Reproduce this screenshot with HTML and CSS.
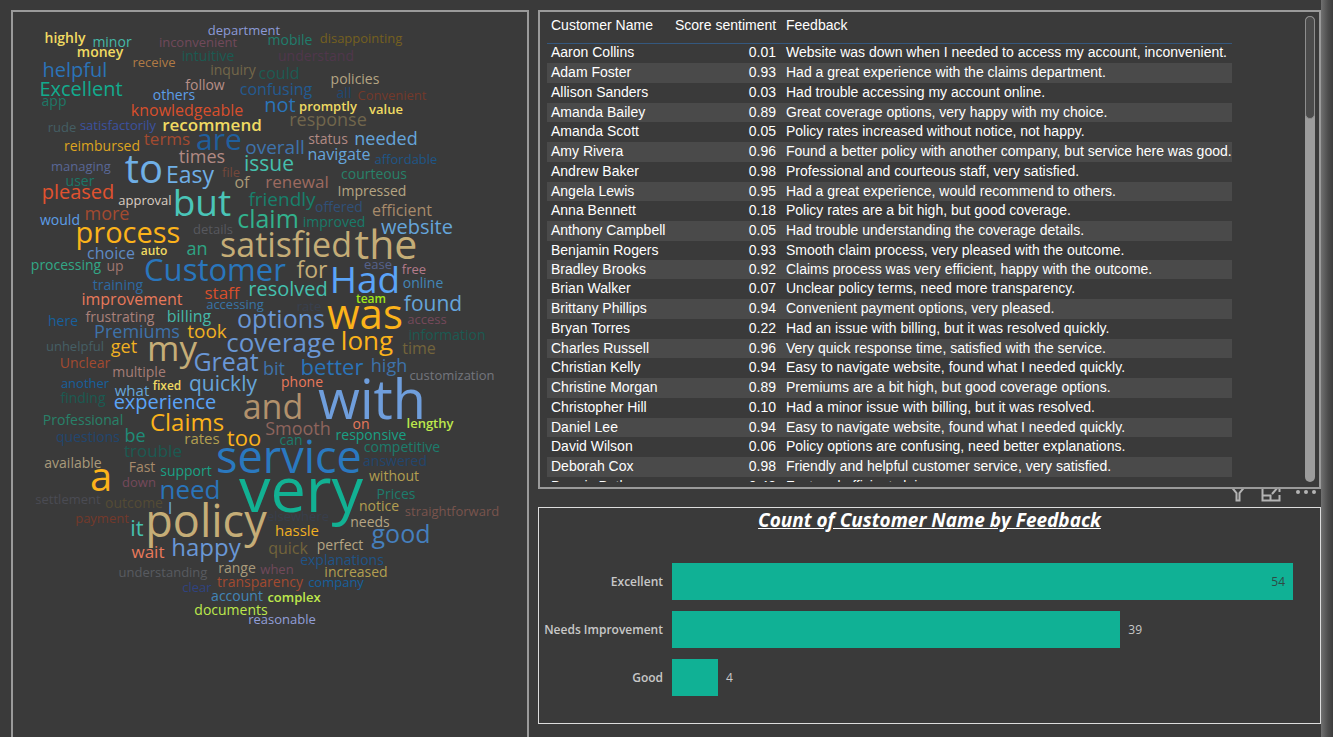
FILE: index.html
```html
<!DOCTYPE html>
<html lang="en">
<head>
<meta charset="utf-8">
<title>Customer feedback report</title>
<link rel="stylesheet" href="styles.css">
</head>
<body>
<main class="report">
  <section class="panel cloud" aria-label="Feedback words">
    <svg class="cloud-canvas" id="cloud" viewBox="13 12 514 725"></svg>
  </section>
  <div class="side">
    <section class="panel feedback">
      <div class="table-scroll">
        <table class="grid">
          <thead><tr><th class="name">Customer Name</th><th class="score">Score sentiment</th><th>Feedback</th></tr></thead>
          <tbody>
            <tr><td>Aaron Collins</td><td>0.01</td><td>Website was down when I needed to access my account, inconvenient.</td></tr>
            <tr><td>Adam Foster</td><td>0.93</td><td>Had a great experience with the claims department.</td></tr>
            <tr><td>Allison Sanders</td><td>0.03</td><td>Had trouble accessing my account online.</td></tr>
            <tr><td>Amanda Bailey</td><td>0.89</td><td>Great coverage options, very happy with my choice.</td></tr>
            <tr><td>Amanda Scott</td><td>0.05</td><td>Policy rates increased without notice, not happy.</td></tr>
            <tr><td>Amy Rivera</td><td>0.96</td><td>Found a better policy with another company, but service here was good.</td></tr>
            <tr><td>Andrew Baker</td><td>0.98</td><td>Professional and courteous staff, very satisfied.</td></tr>
            <tr><td>Angela Lewis</td><td>0.95</td><td>Had a great experience, would recommend to others.</td></tr>
            <tr><td>Anna Bennett</td><td>0.18</td><td>Policy rates are a bit high, but good coverage.</td></tr>
            <tr><td>Anthony Campbell</td><td>0.05</td><td>Had trouble understanding the coverage details.</td></tr>
            <tr><td>Benjamin Rogers</td><td>0.93</td><td>Smooth claim process, very pleased with the outcome.</td></tr>
            <tr><td>Bradley Brooks</td><td>0.92</td><td>Claims process was very efficient, happy with the outcome.</td></tr>
            <tr><td>Brian Walker</td><td>0.07</td><td>Unclear policy terms, need more transparency.</td></tr>
            <tr><td>Brittany Phillips</td><td>0.94</td><td>Convenient payment options, very pleased.</td></tr>
            <tr><td>Bryan Torres</td><td>0.22</td><td>Had an issue with billing, but it was resolved quickly.</td></tr>
            <tr><td>Charles Russell</td><td>0.96</td><td>Very quick response time, satisfied with the service.</td></tr>
            <tr><td>Christian Kelly</td><td>0.94</td><td>Easy to navigate website, found what I needed quickly.</td></tr>
            <tr><td>Christine Morgan</td><td>0.89</td><td>Premiums are a bit high, but good coverage options.</td></tr>
            <tr><td>Christopher Hill</td><td>0.10</td><td>Had a minor issue with billing, but it was resolved.</td></tr>
            <tr><td>Daniel Lee</td><td>0.94</td><td>Easy to navigate website, found what I needed quickly.</td></tr>
            <tr><td>David Wilson</td><td>0.06</td><td>Policy options are confusing, need better explanations.</td></tr>
            <tr><td>Deborah Cox</td><td>0.98</td><td>Friendly and helpful customer service, very satisfied.</td></tr>
            <tr><td>Dennis Butler</td><td>0.48</td><td>Fast and efficient claims process.</td></tr>
          </tbody>
        </table>
      </div>
      <div class="track"><div class="thumb"></div></div>
    </section>
    <div class="tools">
      <button class="tool" aria-label="Filters"><svg width="16" height="18" viewBox="0 0 16 18"><path d="M1.500 1.500h13v1.500l-5 6v7.500h-3v-7.500l-5-6z"/></svg></button>
      <button class="tool" aria-label="Focus mode"><svg width="20" height="18" viewBox="0 0 20 18"><path d="M10 1.500H1.500v15h17V11M12 1.500h6.500V8M18 2l-7 8M1.500 11.500h8v5"/></svg></button>
      <button class="tool" aria-label="More options"><svg class="dots" width="20" height="18" viewBox="0 0 20 18"><circle cx="2" cy="8" r="2"/><circle cx="10" cy="8" r="2"/><circle cx="18" cy="8" r="2"/></svg></button>
    </div>
    <section class="panel chart">
      <h2 class="chart-title">Count of Customer Name by Feedback</h2>
      <div class="bars">
        <span class="cat">Excellent</span><div class="lane"><div class="bar" style="width:100%"><span class="inside">54</span></div></div>
        <span class="cat">Needs Improvement</span><div class="lane"><div class="bar" style="width:72.200%"></div><span class="val">39</span></div>
        <span class="cat">Good</span><div class="lane"><div class="bar" style="width:7.400%"></div><span class="val">4</span></div>
      </div>
    </section>
  </div>
</main>
<div class="edge"></div>
<script src="cloud.js"></script>
</body>
</html>
```

FILE: styles.css
```css
* { box-sizing: border-box; }
body {
  margin: 0;
  display: flex;
  height: 100vh;
  overflow: hidden;
  background: #3a3a3a;
  color: #fff;
  font-family: "Liberation Sans", Arial, sans-serif;
  font-size: 14px;
}
.report {
  flex: 1;
  min-width: 0;
  display: grid;
  grid-template-columns: 518fr 783fr;
  grid-template-rows: minmax(0, 1fr);
  gap: 9px;
  padding: 10px 0 0 11px;
}
.edge {
  width: 12px;
  background: linear-gradient(90deg, #707070, #4c4c4c 60%, #3c3c3c);
}
.panel { border: 2px solid #9a9a9a; }
.cloud { border-bottom: 0; overflow: hidden; }
.cloud-canvas { display: block; width: 100%; }
.cloud-canvas text {
  font-family: "Open Sans", "Noto Sans", sans-serif;
  text-anchor: middle;
}
.cloud-canvas .strong { font-weight: 600; }
.side {
  display: flex;
  flex-direction: column;
  min-width: 0;
  min-height: 0;
  padding-bottom: 13px;
}
.feedback {
  flex: 1;
  min-height: 0;
  display: flex;
  justify-content: space-between;
  padding: 4px 4px 5px 7px;
}
.table-scroll { overflow: hidden; flex: 0 1 685px; }
.grid {
  width: 100%;
  border-collapse: collapse;
  table-layout: fixed;
  white-space: nowrap;
}
.grid th {
  height: 27px;
  padding: 0 6px 8px 4px;
  font-weight: 400;
  text-align: left;
  border-bottom: 1px solid #34587f;
}
.grid .name { width: 124px; }
.grid .score { width: 111px; text-align: right; }
.grid td { height: 20px; padding: 0 6px 2px 4px; line-height: 16px; }
.grid td:nth-child(2) { text-align: right; }
.grid tr:nth-child(4n) td,
.grid tr:nth-child(11) td { height: 19px; padding-bottom: 1px; }
.grid tbody tr:nth-child(even) { background: #4a4a4a; }
.track { width: 10px; border-radius: 5px; background: #9c9c9c; }
.thumb {
  height: 22%;
  border: 1px solid #8e8e8e;
  border-radius: 5px;
  background: #4b4b4b;
}
.tools {
  height: 18px;
  overflow: hidden;
  display: flex;
  justify-content: flex-end;
  align-items: flex-end;
  gap: 15px;
  padding: 0 5px 5px 0;
}
.tool {
  display: block;
  flex: none;
  padding: 0;
  border: 0;
  background: none;
  line-height: 0;
}
.tool svg { fill: none; stroke: #b4b4b4; stroke-width: 2; }
.tool .dots { fill: #b4b4b4; stroke: none; }
.chart {
  border: 1px solid #dcdcdc;
  padding: 0 1px 27px;
  font-family: "Open Sans", "Noto Sans", sans-serif;
}
.chart-title {
  margin: 0 0 31px;
  font-size: 19px;
  line-height: 24px;
  font-style: italic;
  font-weight: 700;
  text-align: center;
  text-decoration: underline;
  color: #fff;
}
.bars {
  display: grid;
  grid-template-columns: 123px 1fr;
  gap: 11px 9px;
  padding-right: 26px;
  font-size: 12px;
  color: #c8c8c8;
}
.cat { align-self: center; text-align: right; font-weight: 600; white-space: nowrap; }
.lane { display: flex; align-items: center; gap: 8px; height: 37px; min-width: 0; }
.bar {
  flex: none;
  height: 100%;
  display: flex;
  align-items: center;
  justify-content: flex-end;
  background: #10b195;
}
.inside { padding-right: 8px; color: #2f4a45; }
```

FILE: cloud.js
```js
// word, centre x, baseline y, font size, colour, strong
const words = [
["highly",65,43,14,"#f0da62",1],["minor",112,47,14,"#45b8a8"],["money",100,57,14,"#f0da62",1],["department",244,35,13,"#8c9ad8"],
["inconvenient",198,47,13,"#71495a"],["mobile",290,45,14,"#1f7d6c"],["disappointing",361,43,13,"#75601f"],["understand",316,61,14,"#50374c"],
["intuitive",208,61,14,"#1b5a52"],["receive",154,67,13,"#b07a45"],["helpful",75,77,20,"#2b73b8"],["inquiry",233,75,14,"#736749"],
["could",279,79,16,"#1c5c53"],["policies",355,84,14,"#b5a583"],["follow",205,90,14,"#b78f88"],["Excellent",81,96,20,"#12ab8e"],
["confusing",276,95,16,"#235a91"],["all",344,98,14,"#1e4872"],["Convenient",392,100,13,"#74392a"],["app",54,106,14,"#1d7867"],
["others",174,100,14,"#5c9ee8"],["knowledgeable",187,116,16,"#d84f2c"],["not",280,112,20,"#2a74b9"],["promptly",328,111,13,"#f0da62",1],
["value",386,114,13,"#f0da62",1],["response",328,126,18,"#71664c"],["rude",62,132,13,"#445e64"],["satisfactorily",118,130,13,"#3c52a0"],
["recommend",212,131,17,"#f0da62",1],["terms",167,145,17,"#a34a30"],["are",219,150,30,"#205f9d"],["overall",275,154,19,"#3e73ad"],
["status",328,144,14,"#b28a84"],["needed",386,145,18,"#65a5db"],["reimbursed",102,151,14,"#dda41f"],["times",202,163,18,"#b28a84"],
["navigate",339,160,16,"#65a5db"],["issue",269,171,21,"#45c0ae"],["affordable",406,164,13,"#1e5687"],["managing",81,171,13,"#596796"],
["to",144,183,40,"#6fafe6"],["Easy",190,183,23,"#6fafe6"],["file",231,177,13,"#75483a"],["of",242,188,16,"#aa9b78"],
["renewal",297,188,17,"#9d6a60"],["courteous",374,179,14,"#288169"],["user",80,186,14,"#1c7767"],["pleased",78,199,20,"#e1522f"],
["approval",145,205,13,"#dbcfc3"],["but",202,216,37,"#4ac5b8"],["friendly",282,206,19,"#17806c"],["Impressed",372,196,14,"#b5a583"],
["would",60,225,14,"#5c9ee8"],["more",107,220,18,"#a34a30"],["offered",339,212,14,"#305078"],["efficient",402,216,16,"#a88b6b"],
["process",128,243,29,"#fcb31a"],["details",213,234,13,"#57585e"],["claim",268,228,25,"#32b18d"],["improved",334,227,14,"#187b69"],
["website",417,234,20,"#65a5db"],["choice",111,259,16,"#5f8ac5"],["auto",154,255,12,"#f0da62",1],["an",197,255,18,"#2ea484"],
["satisfied",286,257,34,"#c5ad77"],["the",386,259,41,"#c5ad77"],["processing",66,270,14,"#32a886"],["up",115,271,14,"#9e766f"],
["Customer",215,281,31,"#2976bd"],["for",312,278,23,"#c5ad77"],["Had",365,293,37,"#5aa4f8"],["ease",378,269,13,"#56628c"],
["free",414,274,13,"#b57b8b"],["training",118,290,14,"#2d69a2"],["staff",222,299,17,"#d84f2c"],["resolved",288,296,20,"#45c0ae"],
["online",423,288,14,"#4286b8"],["improvement",132,305,16,"#e8795a"],["accessing",235,309,13,"#3974a6"],["team",371,303,12,"#a0e818",1],
["found",433,311,21,"#65a5db"],["here",63,326,14,"#17609d"],["frustrating",120,322,14,"#aa817a"],["billing",189,322,16,"#45b8a8"],
["rate",309,311,13,"#38404f"],["options",281,328,25,"#6997d6"],["was",365,329,42,"#fcb31a"],["access",427,324,13,"#75495a"],
["Premiums",137,338,18,"#3e72aa"],["took",207,338,19,"#f0b022"],["coverage",281,352,26,"#6997d6"],["long",367,350,26,"#fcb31a"],
["information",447,340,14,"#1b5a52"],["unhelpful",75,351,13,"#455f65"],["get",124,353,18,"#f0b022"],["my",172,361,35,"#c5ad77"],
["time",419,354,16,"#73643b"],["Unclear",85,368,14,"#a34a30"],["Great",226,371,25,"#6997d6"],["bit",274,375,18,"#3e72aa"],
["better",332,375,22,"#2a74b9"],["high",389,372,18,"#3e72aa"],["multiple",139,377,14,"#a57d77"],["customization",452,380,13,"#74767d"],
["another",85,388,13,"#17609d"],["what",132,396,15,"#65a5db"],["fixed",167,390,12,"#f0da62",1],["quickly",223,391,21,"#65a5db"],
["phone",302,387,14,"#e8795a"],["finding",83,403,14,"#1b5a52"],["experience",165,409,20,"#5aa4f8"],["and",273,419,34,"#b2916c"],
["with",372,419,54,"#6f9edc"],["Claims",187,431,24,"#fcb31a"],["Professional",83,425,14,"#288169"],["Smooth",298,435,18,"#8e645d"],
["on",361,429,14,"#e8795a"],["lengthy",430,428,13,"#bde84c",1],["questions",88,442,14,"#22466e"],["be",135,442,18,"#1f8b78"],
["rates",202,444,15,"#b39f50"],["too",244,446,22,"#fcb31a"],["can",291,445,14,"#1c7c6c"],["responsive",371,440,14,"#19a084"],
["competitive",402,452,14,"#1c7c6c"],["trouble",153,457,17,"#1b5a52"],["service",289,473,45,"#2a79c0"],["answered",395,466,14,"#22466e"],
["available",73,468,14,"#a99a7b"],["Fast",142,472,14,"#a88b6b"],["support",186,476,14,"#19a084"],["without",394,481,14,"#b39f50"],
["a",101,491,40,"#fcb31a"],["down",139,487,13,"#75495a"],["need",190,499,26,"#2a74b9"],["very",301,512,63,"#12b193"],
["Prices",396,499,14,"#1c7c6c"],["settlement",68,504,13,"#4a4b53"],["outcome",134,508,14,"#544b35"],["notice",379,511,14,"#b39f50"],
["straightforward",452,516,13,"#79544d"],["payment",102,523,13,"#74392a"],["I",170,514,17,"#65a5db"],["it",137,536,22,"#45c0ae"],
["policy",206,537,45,"#c5ad77"],["elsewhere",298,521,13,"#383e4b"],["hassle",297,536,15,"#f0b022"],["needs",370,527,14,"#b5a583"],
["wait",148,558,17,"#e8795a"],["happy",206,556,24,"#6997d6"],["quick",288,554,16,"#73643b"],["perfect",340,550,14,"#b5a583"],
["good",401,543,25,"#457fbd"],["explanations",342,565,14,"#205487"],["understanding",163,577,13,"#585a60"],["range",237,573,14,"#a99a7b"],
["when",277,574,13,"#71495a"],["increased",356,577,14,"#b39f50"],["transparency",260,587,14,"#a34a30"],["company",336,587,13,"#17609d"],
["clear",197,592,13,"#2f4381"],["account",237,601,14,"#4286b8"],["complex",294,602,13,"#bde84c",1],["documents",231,615,14,"#bde84c"],
["reasonable",282,624,13,"#929fd9"]
];
const cloud = document.getElementById("cloud");
for (const [label, x, y, size, color, strong] of words) {
  const el = document.createElementNS("http://www.w3.org/2000/svg", "text");
  el.setAttribute("x", x);
  el.setAttribute("y", y);
  el.setAttribute("font-size", size);
  el.setAttribute("fill", color);
  if (strong) el.setAttribute("class", "strong");
  el.textContent = label;
  cloud.append(el);
}
```
